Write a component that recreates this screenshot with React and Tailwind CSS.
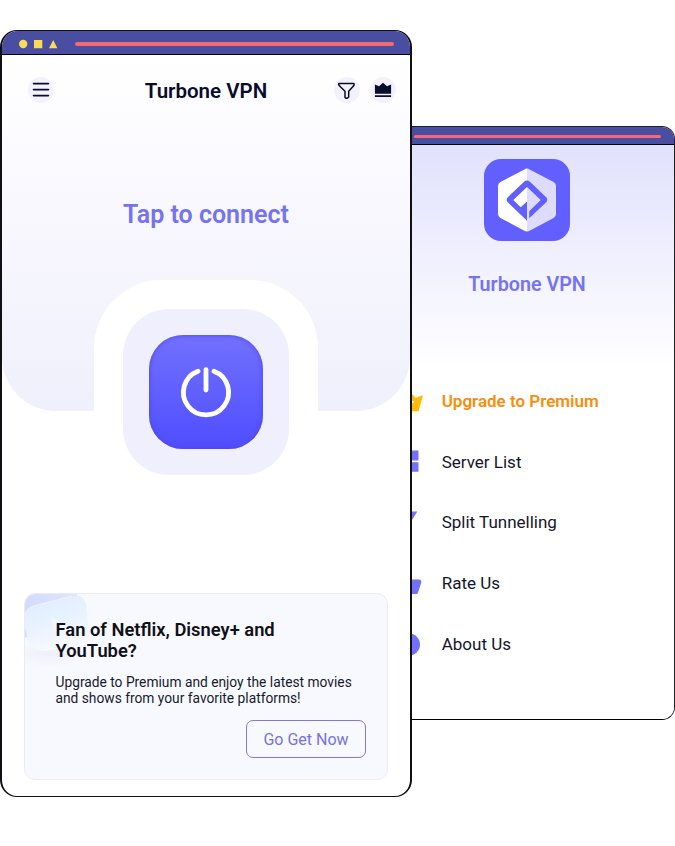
import React from "react";

const MenuIcon = () => (
  <svg width="26" height="26" viewBox="0 0 26 26" className="block">
    <path d="M5.500 6.600h15M5.500 12.600h15M5.500 18.600h15" stroke="#070d2b" strokeWidth="1.600" strokeLinecap="round" />
  </svg>
);

const FunnelIcon = () => (
  <svg width="26" height="26" viewBox="0 0 26 26" fill="none" className="block">
    <path
      d="M5 6.400h14.700l.5.700-.3 1.300-5.200 5.900V20l-1.400 1.300h-1.100L11 20.400v-6.100L5.100 8.500 4.600 7z"
      stroke="#070d2b"
      strokeWidth="1.500"
      strokeLinejoin="round"
    />
  </svg>
);

const CrownIcon = () => (
  <svg width="26" height="26" viewBox="0 0 26 26" fill="#070d2b" className="block">
    <path d="M4.900 7.500 9 9.200 13 5.800l4 3.400 4.100-1.700v9.200H4.900zM4.900 18.200h16.200v1.900H4.900z" />
  </svg>
);

const IconButton = ({ children }) => (
  <button className="size-[26px] rounded-full bg-[#f2f1fd]">{children}</button>
);

const PowerIcon = () => (
  <svg width="56" height="56" viewBox="0 0 56 56" fill="none" stroke="#fff" strokeWidth="4.800" strokeLinecap="round">
    <path d="M28 5.600v20.500M20 7.200a22.600 22.600 0 1 0 16 0" />
  </svg>
);

const Logo = () => (
  <svg width="86" height="82" viewBox="0 0 86 82" className="block">
    <rect width="86" height="82" rx="17" fill="#625fff" />
    <path d="M43 9.500c-1 0-1.800.4-2.600.9L16.400 23q-2.400 1.300-2.400 4v28q0 2.700 2.400 4l24 12.700q1.200.8 2.600.8z" fill="#fff" />
    <path d="M43 9.500c1 0 1.800.4 2.600.9L69.600 23q2.400 1.300 2.400 4v28q0 2.700-2.400 4L45.600 71.700q-1.200.8-2.600.8z" fill="#dddcfc" />
    <path
      d="M40.300 22.600 23.800 38.300q-2.300 2.400 0 5L43 61.700V42.500l-6.300 5.800-7.400-7.400L43 28l13.700 12.900L45.200 52.300v7L62.200 43.300q2.300-2.400 0-5L45.700 22.600q-2.700-2.400-5.400 0z"
      fill="#625fff"
    />
  </svg>
);

const items = [
  {
    label: "Server List",
    icon: <path d="M2 .5h10v10H2zM13 .5h7.500v10H13zM2 12.300h10v9.400H2zM13 12.300h7.500v9.400H13z" />,
  },
  { label: "Split Tunnelling", icon: <path d="M1 .5h18.300L12.500 11.500v9l-4 2v-11z" /> },
  {
    label: "Rate Us",
    icon: <path d="M1 8h4v14H1zM6 22V9l5-8c3 0 2 4 1.500 6.500h8.500q2.700.3 2.300 3l-3.200 10q-.6 1.500-2 1.500z" />,
  },
  { label: "About Us", icon: <circle cx="11" cy="11.500" r="11" /> },
];

function FrontWindow() {
  return (
    <section className="relative z-10 flex h-[767px] w-[412px] shrink-0 flex-col overflow-hidden rounded-[17px] border-x-2 border-y border-[#101014] bg-white">
      <div className="flex h-[24px] shrink-0 items-center border-b border-black bg-[#494ea1] pr-4 pl-[17px]">
        <svg width="40" height="10" viewBox="0 0 40 10" fill="#fbda56" className="mt-0.5 shrink-0">
          <circle cx="4.200" cy="5" r="4.200" />
          <path d="M15 1h8.300v8.300H15zM34.200 1l4.200 8.300H30z" />
        </svg>
        <span className="mt-0.5 ml-[16px] h-1 flex-1 rounded-full bg-[#f36a70]" />
      </div>

      <div className="h-[356px] shrink-0 rounded-b-[54px] bg-linear-to-b from-white via-[#faf9ff] via-35% to-[#f0f0fc]">
        <header className="flex h-[70px] items-center pr-[14px] pl-[26px]">
          <IconButton>
            <MenuIcon />
          </IconButton>
          <h1 className="flex-1 pt-px pl-[24px] text-center text-[20.500px] leading-7 font-semibold text-[#070d2b]">Turbone VPN</h1>
          <div className="flex gap-[10px]">
            <IconButton>
              <FunnelIcon />
            </IconButton>
            <IconButton>
              <CrownIcon />
            </IconButton>
          </div>
        </header>
        <p className="mt-[72px] text-center text-[25px] leading-9 font-semibold text-[#7573ef]">Tap to connect</p>
        <div className="mx-auto mt-[47px] h-[224px] w-[224px] rounded-[68px] bg-white p-[29px]">
          <div className="size-[166px] rounded-[46px] bg-[#f0effe] p-[26px]">
            <button className="flex size-[114px] items-center justify-center rounded-[34px] bg-linear-to-b from-[#7270ff] to-[#504cff] shadow-[inset_0_0_5px_#4a46e6]">
              <PowerIcon />
            </button>
          </div>
        </div>
      </div>

      <article className="relative mx-[22px] mt-auto mb-[16px] h-[187px] shrink-0 overflow-hidden rounded-[11px] border border-[#ebeafa] bg-[#f8f9fe] pr-[30px] pl-[30.500px] pt-[24.500px]">
        <svg width="85" height="85" viewBox="0 0 85 85" className="absolute top-0 left-0">
          <defs>
            <linearGradient id="tile" x1="0" y1="0" x2=".35" y2="1">
              <stop stopColor="#dfebff" />
              <stop offset=".5" stopColor="#e6f2ff" />
              <stop offset="1" stopColor="#f7f9fe" />
            </linearGradient>
            <linearGradient id="corner" x1="0" x2="1">
              <stop stopColor="#d2dbfc" />
              <stop offset="1" stopColor="#dfe5ff" />
            </linearGradient>
            <filter id="soft" x="-50%" y="-50%" width="200%" height="200%">
              <feGaussianBlur stdDeviation="5" />
            </filter>
          </defs>
          <ellipse cx="25" cy="60" rx="28" ry="6" fill="#efedfd" filter="url(#soft)" />
          <path d="M0 0h52v20L0 44z" fill="url(#corner)" />
          <path d="M0 22q1-8 9-10L47 2q12-2 14 8l3 31q0 8-8 10l-36 6Q7 58 3 46L0 34z" fill="url(#tile)" />
          <path d="M0 22q1-8 9-10L47 2" fill="none" stroke="#edf6ff" />
          <path d="M26 23l15 8-11 8z" fill="#f0f8ff" />
        </svg>
        <h2 className="relative text-[18.350px] leading-[21.500px] font-semibold text-[#101117]">
          Fan of Netflix, Disney+ and
          <br />
          YouTube?
        </h2>
        <p className="relative mt-3 text-[13.780px] leading-4 whitespace-nowrap text-[#171a2c]">
          Upgrade to Premium and enjoy the latest movies
          <br />
          and shows from your favorite platforms!
        </p>
        <button className="mt-[14.500px] -mr-[9px] ml-auto block h-[38px] w-[120px] rounded-[7px] border-[1.500px] border-[#7e78df] pt-px text-[16px] text-[#7672e3]">
          Go Get Now
        </button>
      </article>
    </section>
  );
}

function BackWindow() {
  return (
    <section className="mt-[96px] -ml-8 flex h-[594px] w-[295px] shrink-0 flex-col overflow-hidden rounded-r-[13px] border border-[#202024] border-b-black bg-white">
      <div className="flex h-[18px] shrink-0 items-center border-b border-black bg-[#494ea1] pr-[13px]">
        <span className="mt-0.5 ml-[33px] h-[3.500px] flex-1 rounded-full bg-[#f36a70]" />
      </div>
      <div className="flex min-h-0 flex-1 flex-col bg-linear-to-b from-[#e1e1fd] to-white to-[225px]">
        <div className="mt-[14px] ml-[103px] w-[86px]">
          <Logo />
        </div>
        <h2 className="mt-[30px] w-[292px] text-center text-[19.700px] leading-7 font-semibold text-[#7573ef]">Turbone VPN</h2>
        <nav className="mt-[72px] flex flex-col pl-[17px] text-[17px] text-[#13162a]">
          <a className="flex h-[61px] items-center gap-[18.700px] font-semibold text-[#f98d0c]">
            <svg width="25" height="24" viewBox="0 0 25 24" fill="#ffba08" className="shrink-0">
              <path d="M1 5.500l5 3L12 1.500l5.500 6.300L25 5.200 20.500 21.200H4z" />
              <circle cx="14.600" cy="12" r="1.300" fill="#fff" />
            </svg>
            Upgrade to Premium
          </a>
          {items.map(({ label, icon }) => (
            <a key={label} className="flex h-[60.800px] items-center gap-[18.700px]">
              <svg width="25" height="24" viewBox="0 0 25 24" fill="#7370f9" className="shrink-0">
                {icon}
              </svg>
              {label}
            </a>
          ))}
        </nav>
      </div>
    </section>
  );
}

export default function App() {
  return (
    <main className="flex h-[846px] w-[675px] items-start overflow-hidden bg-white pt-[30px] font-[Roboto,sans-serif]">
      <FrontWindow />
      <BackWindow />
    </main>
  );
}
